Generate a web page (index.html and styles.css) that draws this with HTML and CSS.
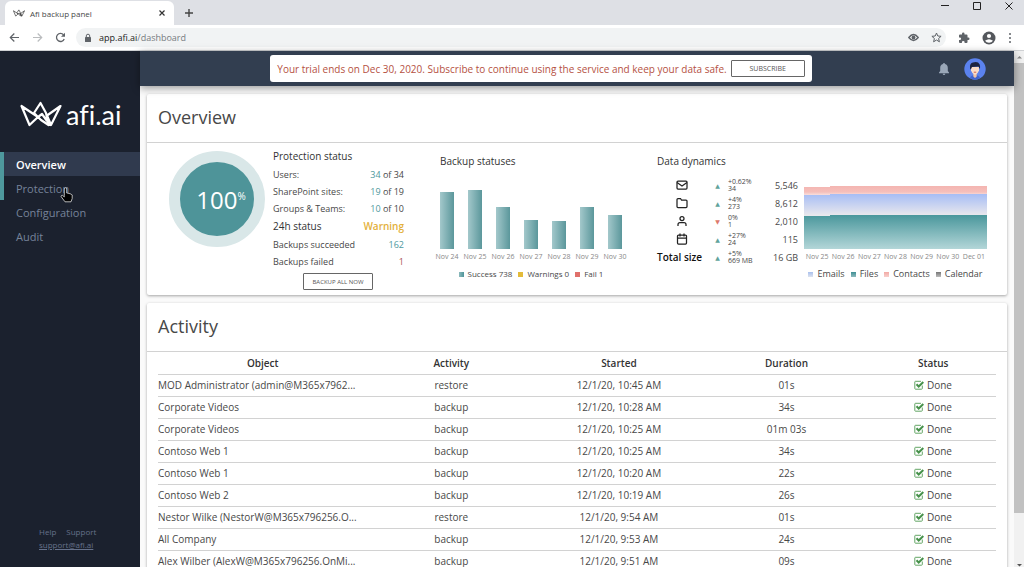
FILE: index.html
```html
<!DOCTYPE html>
<html lang="en">

<head>
    <meta charset="UTF-8">
    <meta name="viewport" content="width=device-width, initial-scale=1.0">
    <title>Afi backup panel</title>
    <link rel="stylesheet" href="styles.css">
</head>

<body>
    <svg class="defs" aria-hidden="true">
        <symbol id="crown" viewBox="0 0 42 26">
            <path d="M1.500 5 L9.500 24 L18 16 Z M20.500 2 L14 12 L21 19 L28.500 24 L26 12 Z M40.500 5 L27 14.500 L31 24 Z M18 16 L22 13 L27 20 M28.500 24H31" fill="none" stroke="currentColor" stroke-width="2.200" stroke-linejoin="round"/>
        </symbol>
        <symbol id="check" viewBox="0 0 10 10">
            <path d="M8.300 5.500V8.500a.7.7 0 0 1-.7.7H1.500a.7.7 0 0 1-.7-.7V2a.7.7 0 0 1 .7-.7H7" fill="none" stroke="#63a665" stroke-width="1"/>
            <path d="M2.500 4.300 4.700 6.500 9.300 2" fill="none" stroke="#46914a" stroke-width="2"/>
        </symbol>
    </svg>

    <div class="tabs">
        <div class="tab">
            <svg class="favicon" viewBox="0 0 42 26"><use href="#crown"/></svg>
            <span class="tab-title">Afi backup panel</span>
            <button class="icon-btn" aria-label="Close tab"><svg width="8" height="8" viewBox="0 0 8 8"><path d="M1.500 1.500l5 5M6.500 1.500l-5 5" stroke="#333" stroke-width="1.200"/></svg></button>
        </div>
        <button class="icon-btn new-tab" aria-label="New tab"><svg width="10" height="10" viewBox="0 0 10 10"><path d="M5 1v8M1 5h8" stroke="#444" stroke-width="1.400"/></svg></button>
        <div class="window-controls">
            <button class="icon-btn" aria-label="Minimize"><svg width="8" height="8" viewBox="0 0 8 8"><path d="M0 3.500h8" stroke="#222"/></svg></button>
            <button class="icon-btn" aria-label="Maximize"><svg width="8" height="8" viewBox="0 0 8 8"><path d="M.5.5h7v7h-7z" fill="none" stroke="#222"/></svg></button>
            <button class="icon-btn" aria-label="Close"><svg width="8" height="8" viewBox="0 0 8 8"><path d="M.5.5l7 7M7.500.5l-7 7" stroke="#222"/></svg></button>
        </div>
    </div>

    <div class="toolbar">
        <button class="icon-btn" aria-label="Back"><svg width="11" height="11" viewBox="0 0 11 11"><path d="M10 5.500H1.500M5.300 1.500l-4 4 4 4" fill="none" stroke="#5f6368" stroke-width="1.200"/></svg></button>
        <button class="icon-btn" aria-label="Forward"><svg width="11" height="11" viewBox="0 0 11 11"><path d="M1 5.500h8.500M5.700 1.500l4 4-4 4" fill="none" stroke="#babcbe" stroke-width="1.200"/></svg></button>
        <button class="icon-btn" aria-label="Reload"><svg width="11" height="11" viewBox="0 0 11 11"><path d="M9.200 7A4 4 0 1 1 8.500 2.800" fill="none" stroke="#5f6368" stroke-width="1.300"/><path d="M10 .8v4H6z" fill="#5f6368"/></svg></button>
        <div class="address">
            <svg width="8" height="10" viewBox="0 0 8 10"><rect x="1" y="4" width="6" height="5" rx=".6" fill="#5f6368"/><path d="M2.300 4V2.900a1.700 1.700 0 0 1 3.400 0V4" fill="none" stroke="#5f6368"/></svg>
            <span class="url">app.afi.ai<span>/dashboard</span></span>
            <button class="icon-btn" aria-label="Tracking"><svg width="11" height="9" viewBox="0 0 11 9"><path d="M.8 4.500Q5.500-1.500 10.200 4.500 5.500 10.500.8 4.500z" fill="none" stroke="#5f6368" stroke-width="1.400"/><circle cx="5.500" cy="4.500" r="1.900" fill="#5f6368"/></svg></button>
            <button class="icon-btn" aria-label="Bookmark"><svg width="11" height="11" viewBox="0 0 11 11"><path d="M5.500 1l1.300 3 3.300.3-2.500 2.200.8 3.300-2.900-1.800-2.900 1.800.8-3.300L.9 4.300 4.200 4z" fill="none" stroke="#5f6368"/></svg></button>
        </div>
        <button class="icon-btn" aria-label="Extensions"><svg width="12" height="12" viewBox="0 0 24 24"><path d="M20.500 11H19V7a2 2 0 0 0-2-2h-4V3.500a2.500 2.500 0 0 0-5 0V5H4a2 2 0 0 0-2 2v3.800h1.500a2.700 2.700 0 0 1 0 5.400H2V20a2 2 0 0 0 2 2h3.800v-1.500a2.700 2.700 0 0 1 5.400 0V22H17a2 2 0 0 0 2-2v-4h1.500a2.500 2.500 0 0 0 0-5z" fill="#5f6368"/></svg></button>
        <button class="icon-btn" aria-label="Profile"><svg width="14" height="14" viewBox="0 0 14 14"><circle cx="7" cy="7" r="6.500" fill="#54575c"/><circle cx="7" cy="5" r="2.100" fill="#fff"/><path d="M3 9.800Q7 6.600 11 9.800 9.500 11.800 7 11.800 4.500 11.800 3 9.800z" fill="#fff"/></svg></button>
        <button class="icon-btn" aria-label="Menu"><svg width="4" height="12" viewBox="0 0 4 12"><g fill="#5f6368"><circle cx="2" cy="2" r="1"/><circle cx="2" cy="6" r="1"/><circle cx="2" cy="10" r="1"/></g></svg></button>
    </div>

    <div class="app">
        <aside class="sidebar">
            <a class="logo" href="#">
                <svg width="42" height="26"><use href="#crown"/></svg>
                <span>afi.ai</span>
            </a>
            <nav class="menu">
                <a class="active" href="#">Overview</a>
                <a class="hover" href="#">Protection
                    <svg class="pointer" width="14" height="16" viewBox="0 0 14 16"><path d="M4.300 8.500V2a1.200 1.200 0 0 1 2.400 0v4l1.200.2 1 .3 1.200.2 1.100.6 1 .6v3.600L11 14.800H5L1.200 9.700a1 1 0 0 1 1.500-1.200l1.600 1.400z" fill="#000" stroke="#ddd" stroke-width=".8"/></svg>
                </a>
                <a href="#">Configuration</a>
                <a href="#">Audit</a>
            </nav>
            <div class="help">
                <a href="#">Help</a>
                <a href="#">Support</a>
                <a class="mail" href="#">support@afi.ai</a>
            </div>
        </aside>

        <main class="main">
            <header class="header">
                <div class="notice">
                    <div class="trial">
                        <span>Your trial ends on Dec 30, 2020. Subscribe to continue using the service and keep your data safe.</span>
                        <button class="btn">SUBSCRIBE</button>
                    </div>
                </div>
                <button class="icon-btn" aria-label="Notifications"><svg width="12" height="14" viewBox="0 0 12 14"><path d="M6 1a1 1 0 0 1 1 1c2 .5 2.800 2 2.800 4v3L11 10.500v.7H1v-.7L2.200 9V6C2.200 4 3 2.500 5 2a1 1 0 0 1 1-1zM4.700 11.800h2.600a1.300 1.300 0 0 1-2.600 0z" fill="#9aa7b8"/></svg></button>
                <button class="icon-btn" aria-label="Account">
                    <svg width="22" height="22" viewBox="0 0 22 22"><circle cx="11" cy="11" r="10.700" fill="#5b82ee"/><path d="M6 20Q7 17 11 17t5 3Q11 23 6 20z" fill="#3f63cf"/><path d="M9.300 14h3.400v4.500L11 20l-1.700-1.500z" fill="#f0c3a8"/><path d="M7 9h8v3.500Q14 16 11 17 8 16 7 12.500z" fill="#f9dcc8"/><path d="M6 10.500Q5.500 5 9 4.500 14 3 15.700 6.500 16.500 9 15.700 11L14.500 8.500 8 9 6.800 11.500z" fill="#1d2440"/><path d="M9.800 14.200h2.400" stroke="#d0624f"/></svg>
                </button>
            </header>

            <div class="content">
                <section class="card">
                    <h2>Overview</h2>
                    <div class="overview">
                        <div class="donut"><div>100<sup>%</sup></div></div>

                        <div class="status">
                            <h3>Protection status</h3>
                            <p>Users: <span><b>34</b> of 34</span></p>
                            <p>SharePoint sites: <span><b>19</b> of 19</span></p>
                            <p>Groups &amp; Teams: <span><b>10</b> of 10</span></p>
                            <h3>24h status <span class="warning">Warning</span></h3>
                            <p>Backups succeeded <b>162</b></p>
                            <p>Backups failed <span class="fail">1</span></p>
                            <button class="btn">BACKUP ALL NOW</button>
                        </div>

                        <div class="backups">
                            <h3>Backup statuses</h3>
                            <div class="bars">
                                <div><i style="height: 57px"></i>Nov 24</div>
                                <div><i style="height: 59px"></i>Nov 25</div>
                                <div><i style="height: 42px"></i>Nov 26</div>
                                <div><i style="height: 29px"></i>Nov 27</div>
                                <div><i style="height: 28px"></i>Nov 28</div>
                                <div><i style="height: 42px"></i>Nov 29</div>
                                <div><i style="height: 34px"></i>Nov 30</div>
                            </div>
                            <div class="legend">
                                <span class="success">Success 738</span>
                                <span class="warn">Warnings 0</span>
                                <span class="failed">Fail 1</span>
                            </div>
                        </div>

                        <div class="dynamics">
                            <h3>Data dynamics</h3>
                            <table>
                                <tr>
                                    <th><svg width="12" height="12" viewBox="0 0 24 24"><rect x="2" y="4" width="20" height="16" rx="2"/><path d="M2 7l10 7 10-7"/></svg></th>
                                    <td class="up">▲</td><td class="change">+0.62%<br>34</td><td>5,546</td>
                                </tr>
                                <tr>
                                    <th><svg width="12" height="12" viewBox="0 0 24 24"><path d="M22 19a2 2 0 0 1-2 2H4a2 2 0 0 1-2-2V5a2 2 0 0 1 2-2h5l2 3h9a2 2 0 0 1 2 2z"/></svg></th>
                                    <td class="up">▲</td><td class="change">+4%<br>273</td><td>8,612</td>
                                </tr>
                                <tr>
                                    <th><svg width="12" height="12" viewBox="0 0 24 24"><path d="M20 22v-3a4 4 0 0 0-4-4H8a4 4 0 0 0-4 4v3"/><circle cx="12" cy="7" r="4"/></svg></th>
                                    <td class="down">▼</td><td class="change">0%<br>1</td><td>2,010</td>
                                </tr>
                                <tr>
                                    <th><svg width="12" height="12" viewBox="0 0 24 24"><rect x="3" y="4" width="18" height="18" rx="2"/><path d="M16 1v6M8 1v6M3 10h18"/></svg></th>
                                    <td class="up">▲</td><td class="change">+27%<br>24</td><td>115</td>
                                </tr>
                                <tr>
                                    <th>Total size</th>
                                    <td class="up">▲</td><td class="change">+5%<br>669 MB</td><td>16 GB</td>
                                </tr>
                            </table>
                        </div>

                        <div class="trend">
                            <svg viewBox="0 0 183 64" preserveAspectRatio="none">
                                <defs>
                                    <linearGradient id="contacts" x2="0" y2="1"><stop stop-color="#f4b5b1"/><stop offset=".6" stop-color="#f5bfbb"/><stop offset="1" stop-color="#fbe9e8"/></linearGradient>
                                    <linearGradient id="emails" x2="0" y2="1"><stop stop-color="#a6bdf5"/><stop offset="1" stop-color="#ebe9ec"/></linearGradient>
                                    <linearGradient id="files" x2="0" y2="1"><stop stop-color="#4a979c"/><stop offset="1" stop-color="#b3d6d8"/></linearGradient>
                                </defs>
                                <path d="M0 2h26V1h157v9H26v1H0z" fill="url(#contacts)"/>
                                <path d="M0 10h26V9h157v21H26v1H0z" fill="url(#emails)"/>
                                <path d="M0 31h26v-1h157v34H0z" fill="url(#files)"/>
                            </svg>
                            <div class="dates">
                                <span>Nov 25</span><span>Nov 26</span><span>Nov 27</span><span>Nov 28</span><span>Nov 29</span><span>Nov 30</span><span>Dec 01</span>
                            </div>
                            <div class="legend">
                                <span class="emails">Emails</span>
                                <span class="files">Files</span>
                                <span class="contacts">Contacts</span>
                                <span class="calendar">Calendar</span>
                            </div>
                        </div>
                    </div>
                </section>

                <section class="card">
                    <h2>Activity</h2>
                    <div class="activity">
                        <table>
                            <thead>
                                <tr><th>Object</th><th>Activity</th><th>Started</th><th>Duration</th><th>Status</th></tr>
                            </thead>
                            <tbody>
                                <tr><td>MOD Administrator (admin@M365x7962...</td><td>restore</td><td>12/1/20, 10:45 AM</td><td>01s</td><td><svg width="10" height="10"><use href="#check"/></svg> Done</td></tr>
                                <tr><td>Corporate Videos</td><td>backup</td><td>12/1/20, 10:28 AM</td><td>34s</td><td><svg width="10" height="10"><use href="#check"/></svg> Done</td></tr>
                                <tr><td>Corporate Videos</td><td>backup</td><td>12/1/20, 10:25 AM</td><td>01m 03s</td><td><svg width="10" height="10"><use href="#check"/></svg> Done</td></tr>
                                <tr><td>Contoso Web 1</td><td>backup</td><td>12/1/20, 10:25 AM</td><td>34s</td><td><svg width="10" height="10"><use href="#check"/></svg> Done</td></tr>
                                <tr><td>Contoso Web 1</td><td>backup</td><td>12/1/20, 10:20 AM</td><td>22s</td><td><svg width="10" height="10"><use href="#check"/></svg> Done</td></tr>
                                <tr><td>Contoso Web 2</td><td>backup</td><td>12/1/20, 10:19 AM</td><td>26s</td><td><svg width="10" height="10"><use href="#check"/></svg> Done</td></tr>
                                <tr><td>Nestor Wilke (NestorW@M365x796256.O...</td><td>restore</td><td>12/1/20, 9:54 AM</td><td>01s</td><td><svg width="10" height="10"><use href="#check"/></svg> Done</td></tr>
                                <tr><td>All Company</td><td>backup</td><td>12/1/20, 9:53 AM</td><td>24s</td><td><svg width="10" height="10"><use href="#check"/></svg> Done</td></tr>
                                <tr><td>Alex Wilber (AlexW@M365x796256.OnMi...</td><td>backup</td><td>12/1/20, 9:51 AM</td><td>09s</td><td><svg width="10" height="10"><use href="#check"/></svg> Done</td></tr>
                            </tbody>
                        </table>
                    </div>
                </section>
            </div>
        </main>

        <div class="scrollbar">
            <svg width="10" height="12" viewBox="0 0 10 12"><path d="M3 7.500l2.500-2.500L8 7.500z" fill="#8a8a8a"/></svg>
            <div class="thumb"></div>
            <svg width="10" height="6" viewBox="0 0 10 6"><path d="M3 3h5L5.500 5.500z" fill="#555"/></svg>
        </div>
    </div>
</body>
</html>
```
FILE: styles.css
```css
* {
    box-sizing: border-box;
}

body {
    display: flex;
    flex-direction: column;
    height: 100vh;
    margin: 0;
    overflow: hidden;
    font-family: 'Open Sans', 'Noto Sans', sans-serif;
    font-size: 10px;
    color: #484848;
    background-color: #fff;
}

h2, h3, p {
    margin: 0;
    font-weight: normal;
}

a {
    text-decoration: none;
}

svg {
    flex: none;
}

.defs {
    position: absolute;
    width: 0;
    height: 0;
}

.icon-btn {
    display: flex;
    padding: 0;
    border: 0;
    background: none;
    cursor: pointer;
}

.btn {
    height: 17px;
    padding: 0;
    border: 1px solid #666;
    background-color: #fff;
    color: #555;
    font-family: inherit;
    font-size: 7px;
    border-radius: 1px;
}

/* browser */

.tabs {
    display: flex;
    flex: none;
    height: 25px;
    padding-left: 5px;
    background-color: #dee0e5;
}

.tab {
    display: flex;
    align-items: center;
    width: 169px;
    margin-top: 1px;
    padding: 0 8px;
    border-radius: 6px 6px 0 0;
    background-color: #fff;
    font-size: 8px;
}

.favicon {
    width: 12px;
    height: 8px;
    color: #222;
}

.tab-title {
    flex: 1;
    margin-left: 5px;
}

.new-tab {
    align-items: center;
    margin-left: 10px;
}

.window-controls {
    display: flex;
    gap: 24px;
    margin-left: auto;
    padding: 2px 11px 0 0;
    height: 10px;
}

.toolbar {
    display: flex;
    flex: none;
    align-items: center;
    gap: 12px;
    height: 26px;
    padding: 0 12px 0 9px;
    border-bottom: 1px solid #cfd1d4;
}

.address {
    display: flex;
    flex: 1;
    align-items: center;
    gap: 12px;
    height: 19px;
    margin-left: -2px;
    padding: 0 4px 0 8px;
    border-radius: 10px;
    background-color: #f1f3f4;
}

.url {
    flex: 1;
    margin-left: -5px;
    color: #222;
    font-size: 9px;
}

.url span {
    color: #777b80;
}

/* sidebar */

.app {
    display: flex;
    flex: 1;
    min-height: 0;
}

.sidebar {
    display: flex;
    flex: none;
    flex-direction: column;
    width: 140px;
    padding-bottom: 16px;
    background-color: #1b212e;
}

.logo {
    display: flex;
    align-items: center;
    gap: 4px;
    height: 101px;
    padding: 25px 0 0 20px;
    color: #fff;
    font-family: Lato, sans-serif;
    font-size: 27px;
    font-variant-ligatures: none;
}

.menu a {
    display: flex;
    align-items: center;
    position: relative;
    height: 24px;
    padding-left: 12px;
    border-left: 4px solid transparent;
    color: #76839a;
    font-size: 11px;
}

.menu .active {
    border-color: #4e989d;
    background-color: #303a4e;
    color: #fff;
    font-weight: 600;
}

.menu .hover {
    border-color: #4e989d;
}

.pointer {
    position: absolute;
    left: 56px;
    top: 11px;
}

.help {
    display: flex;
    flex-wrap: wrap;
    column-gap: 10px;
    margin-top: auto;
    padding-left: 39px;
    font-size: 8px;
    line-height: 13px;
}

.help a {
    color: #66718a;
}

.help .mail {
    text-decoration: underline;
}

/* main */

.main {
    display: flex;
    flex: 1;
    flex-direction: column;
    min-width: 0;
}

.header {
    display: flex;
    flex: none;
    align-items: center;
    gap: 14px;
    height: 35px;
    padding-right: 28px;
    background-color: #323e50;
    box-shadow: 0 2px 8px rgba(0, 0, 0, 0.4);
    z-index: 1;
}

.notice {
    display: flex;
    flex: 1;
    justify-content: center;
    margin-right: -14px;
    padding-left: 4px;
}

.trial {
    display: flex;
    align-items: center;
    gap: 4px;
    height: 27px;
    padding: 0 7px;
    border-radius: 3px;
    background-color: #fff;
    color: #b5513f;
    white-space: nowrap;
}

.trial .btn {
    width: 74px;
}

.content {
    display: flex;
    flex: 1;
    flex-direction: column;
    gap: 8px;
    padding: 8px 7px 0;
    min-height: 0;
    overflow: hidden;
    background-color: #fafafa;
}

.card {
    flex: none;
    border-radius: 2px;
    background-color: #fff;
    box-shadow: 0 1px 3px rgba(0, 0, 0, 0.35);
}

.card h2 {
    height: 49px;
    padding-left: 11px;
    border-bottom: 1px solid #d2d2d2;
    font-size: 18px;
    line-height: 47px;
}

.card h3 {
    color: #333;
    font-size: 10px;
    font-weight: 500;
}

.overview {
    display: flex;
    height: 152px;
    padding: 4px 20px 0 22px;
}

.donut {
    display: flex;
    align-items: center;
    justify-content: center;
    width: 96px;
    height: 96px;
    margin: 4px 8px 0 0;
    padding-left: 8px;
    border: 11px solid #d9e7e8;
    border-radius: 50%;
    background-color: #4e9499;
    color: #fff;
    font-size: 24px;
}

.donut sup {
    font-size: 10px;
    line-height: 10px;
    vertical-align: 9px;
}

.status {
    display: flex;
    flex-direction: column;
    width: 131px;
    margin-right: 29px;
    font-size: 9px;
}

.status h3, .status p {
    display: flex;
    justify-content: space-between;
    line-height: 17px;
}

.status h3 {
    line-height: 19px;
}

.status b {
    color: #4e989d;
    font-weight: normal;
}

.status .warning {
    color: #e3b03a;
    font-weight: 600;
}

.status .fail {
    color: #a55;
}

.status .btn {
    width: 70px;
    margin: 3px 0 0 30px;
    font-size: 6px;
}

.backups {
    width: 196px;
    margin-right: 28px;
}

.backups h3 {
    padding-left: 7px;
}

.backups h3, .dynamics h3 {
    height: 29px;
    padding-top: 7px;
    line-height: 15px;
}

.bars {
    display: grid;
    grid-template-columns: repeat(7, 1fr);
    align-items: end;
    height: 89px;
    color: #888;
    font-size: 7px;
    line-height: 16px;
    text-align: center;
}

.bars i {
    display: block;
    width: 14px;
    margin: 0 auto;
    background: linear-gradient(to right, #a3c8cb, #5b979b);
}

.legend {
    display: flex;
    justify-content: center;
    gap: 6px;
    font-size: 9px;
    line-height: 18px;
}

.backups .legend {
    font-size: 8px;
}

.legend span::before {
    content: '';
    display: inline-block;
    width: 5px;
    height: 5px;
    margin-right: 4px;
    background: linear-gradient(to right, #8dbabd, #4e9499);
}

.legend .warn::before {
    background: #e3bb3a;
}

.legend .failed::before {
    background: #e0706b;
}

.legend .emails::before {
    background: linear-gradient(#a9c0ee, #dde3ef);
}

.legend .files::before {
    background: linear-gradient(#3f8f94, #8dbabd);
}

.legend .contacts::before {
    background: linear-gradient(#f2aaa5, #f8cfcc);
}

.legend .calendar::before {
    background: linear-gradient(#777, #bbb);
}

.dynamics table {
    width: 141px;
    border-collapse: collapse;
}

.dynamics tr {
    height: 18px;
}

.dynamics th, .dynamics td {
    padding: 0;
    font-size: 9px;
    text-align: right;
}

.dynamics th {
    width: 50px;
    color: #111;
    font-size: 10px;
    font-weight: 600;
    text-align: left;
    white-space: nowrap;
}

.dynamics th svg {
    display: block;
    margin: 0 auto;
    fill: none;
    stroke: #222;
    stroke-width: 2.5px;
}

.dynamics .up, .dynamics .down {
    width: 21px;
    color: #5fa39b;
    font-family: 'DejaVu Sans', sans-serif;
    font-size: 6px;
    text-align: center;
}

.dynamics .down {
    color: #dd7a6c;
}

.dynamics .change {
    font-size: 7px;
    line-height: 7px;
    text-align: left;
    white-space: nowrap;
}

.trend {
    width: 183px;
    margin-left: auto;
    padding-top: 38px;
}

.trend > svg {
    display: block;
    width: 100%;
    height: 64px;
}

.dates {
    display: grid;
    grid-template-columns: repeat(7, 1fr);
    color: #888;
    font-size: 7px;
    line-height: 16px;
    text-align: center;
    white-space: nowrap;
}

.activity {
    padding: 0 11px;
}

.activity table {
    width: 100%;
    border-collapse: collapse;
    table-layout: fixed;
}

.activity th, .activity td {
    height: 22px;
    padding: 0;
    border-bottom: 1px solid #d2d2d2;
    text-align: center;
    white-space: nowrap;
}

.activity th {
    color: #333;
    font-weight: 600;
}

.activity th:first-child {
    width: 25%;
}

.activity th:last-child {
    width: 15%;
}

.activity td:first-child {
    text-align: left;
}

.activity td svg {
    vertical-align: -1px;
}

/* page scrollbar */

.scrollbar {
    display: flex;
    flex: none;
    flex-direction: column;
    justify-content: space-between;
    width: 10px;
    background-color: #f1f1f1;
}

.thumb {
    height: 450px;
    margin-bottom: auto;
    background-color: #c1c1c1;
}
```
